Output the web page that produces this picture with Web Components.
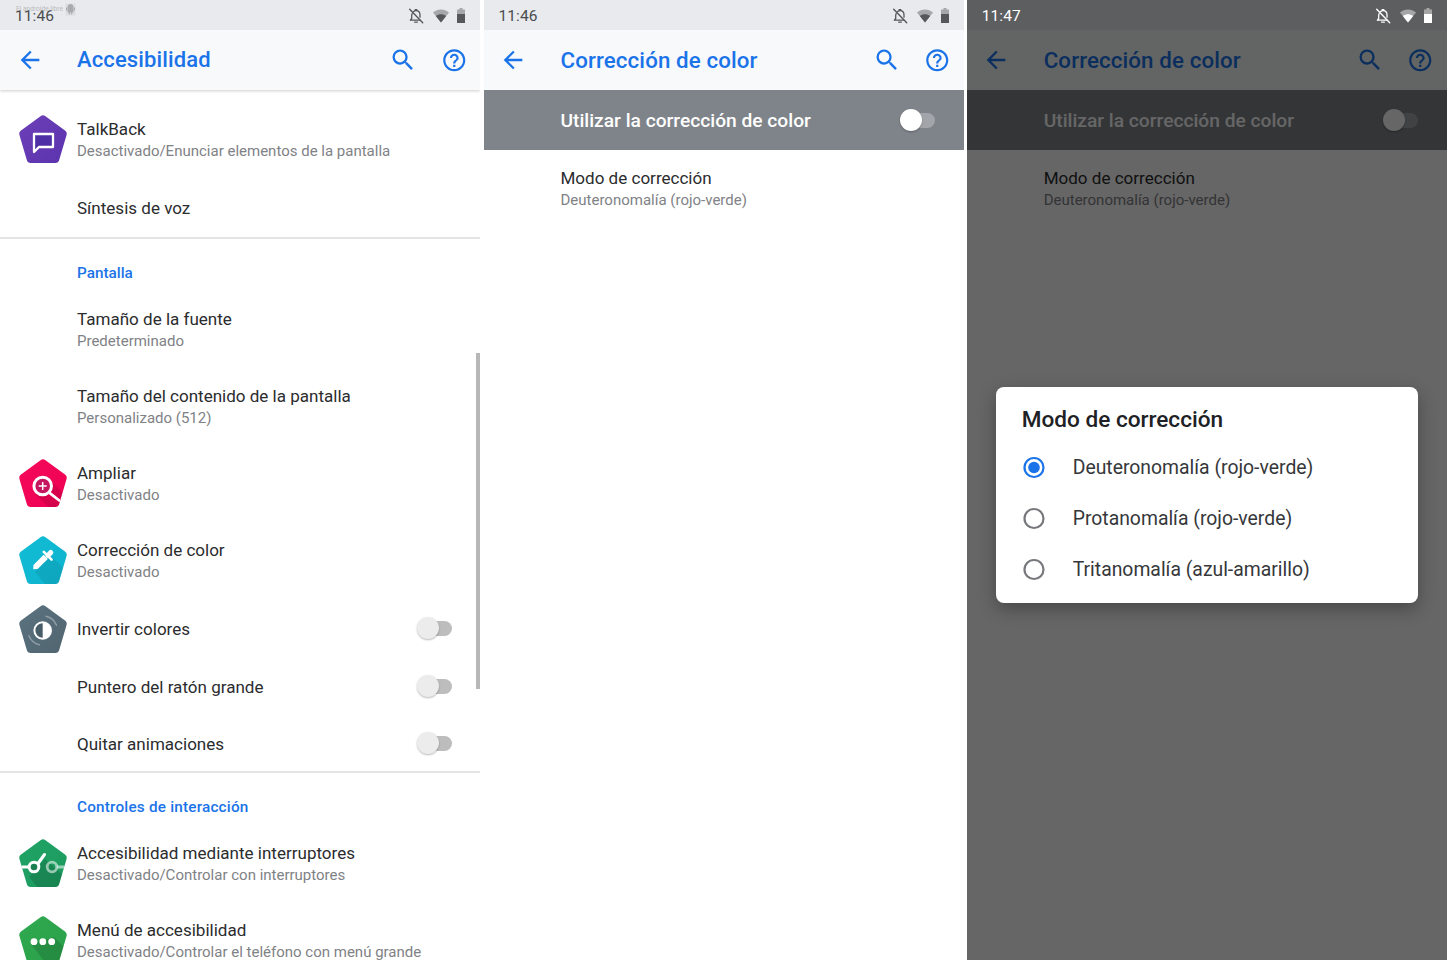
<!DOCTYPE html>
<html lang="es"><head><meta charset="utf-8"><title>Accesibilidad</title>
<style>
html,body{margin:0;padding:0;background:#fff;overflow:hidden}
body{width:1447px;height:960px;font-family:Roboto,"Liberation Sans",sans-serif}
</style></head><body>
<x-desk>
  <x-phone>
    <x-statusbar time="11:46" watermark></x-statusbar>
    <x-appbar shadow style="font-size:22px">Accesibilidad</x-appbar>
    <x-list top="12">
      <x-row two><x-pent slot="icon" kind="talkback"></x-pent>TalkBack<span slot="sub">Desactivado/Enunciar elementos de la pantalla</span></x-row>
      <x-row>Síntesis de voz</x-row>
      <x-divider></x-divider>
      <x-category style="letter-spacing:0">Pantalla</x-category>
      <x-row two>Tamaño de la fuente<span slot="sub">Predeterminado</span></x-row>
      <x-row two>Tamaño del contenido de la pantalla<span slot="sub">Personalizado (512)</span></x-row>
      <x-row two><x-pent slot="icon" kind="magnify"></x-pent>Ampliar<span slot="sub">Desactivado</span></x-row>
      <x-row two><x-pent slot="icon" kind="dropper"></x-pent>Corrección de color<span slot="sub">Desactivado</span></x-row>
      <x-row><x-pent slot="icon" kind="invert"></x-pent>Invertir colores<x-toggle slot="end"></x-toggle></x-row>
      <x-row>Puntero del ratón grande<x-toggle slot="end"></x-toggle></x-row>
      <x-row style="min-height:55px">Quitar animaciones<x-toggle slot="end"></x-toggle></x-row>
      <x-divider></x-divider>
      <x-category>Controles de interacción</x-category>
      <x-row two><x-pent slot="icon" kind="switch"></x-pent>Accesibilidad mediante interruptores<span slot="sub">Desactivado/Controlar con interruptores</span></x-row>
      <x-row two><x-pent slot="icon" kind="menu"></x-pent>Menú de accesibilidad<span slot="sub">Desactivado/Controlar el teléfono con menú grande</span></x-row>
    </x-list>
    <x-scrollthumb></x-scrollthumb>
  </x-phone>
  <x-phone>
    <x-statusbar time="11:46"></x-statusbar>
    <x-appbar>Corrección de color</x-appbar>
    <x-list>
      <x-masterrow>Utilizar la corrección de color<x-toggle slot="end" light></x-toggle></x-masterrow>
      <x-row two style="padding-top:2px">Modo de corrección<span slot="sub">Deuteronomalía (rojo-verde)</span></x-row>
    </x-list>
  </x-phone>
  <x-phone>
    <x-statusbar time="11:47" dark></x-statusbar>
    <x-appbar>Corrección de color</x-appbar>
    <x-list>
      <x-masterrow>Utilizar la corrección de color<x-toggle slot="end" light></x-toggle></x-masterrow>
      <x-row two style="padding-top:2px">Modo de corrección<span slot="sub">Deuteronomalía (rojo-verde)</span></x-row>
    </x-list>
    <x-scrim>
      <x-dialog heading="Modo de corrección">
        <x-radio checked>Deuteronomalía (rojo-verde)</x-radio>
        <x-radio>Protanomalía (rojo-verde)</x-radio>
        <x-radio>Tritanomalía (azul-amarillo)</x-radio>
      </x-dialog>
    </x-scrim>
  </x-phone>
</x-desk>
<script>
const BLUE='#1a73e8';
const P='M21.5 1.2Q24 -.6 26.5 1.2L46 15.6Q48.4 17.4 47.5 20.2L40.2 45Q39.4 48 36.4 48L11.6 48Q8.6 48 7.8 45L.5 20.2Q-.4 17.4 2 15.6Z';
function def(name,css,html){
  customElements.define(name,class extends HTMLElement{
    constructor(){super();this.attachShadow({mode:'open'});}
    connectedCallback(){
      if(this.__r)return;this.__r=1;
      this.shadowRoot.innerHTML='<style>'+css+'</style>'+(typeof html==='function'?html(this):html);
    }
  });
}
def('x-desk',':host{display:flex;width:1447px;height:960px;overflow:hidden}::slotted(x-phone:nth-child(2)){margin-left:3.5px}::slotted(x-phone:nth-child(3)){margin-left:3.2px}','<slot></slot>');
def('x-phone',':host{display:flex;flex-direction:column;position:relative;width:480px;height:960px;flex:none;overflow:hidden;background:#fff}','<slot></slot>');
def('x-statusbar',`:host{display:flex;align-items:center;height:30px;flex:none;background:#e8eaed;color:#4a4c4f;position:relative;z-index:5;font:400 15.5px/28px Roboto,sans-serif;letter-spacing:.1px;padding:0 15px;box-sizing:border-box}
:host([dark]){background:#5d5e5f;color:#fff}
.tm{padding-top:2px}
.i{margin-left:auto;display:flex;align-items:center;height:30px;padding-top:1px;box-sizing:border-box}
svg{display:block}
.wm{position:absolute;left:16px;top:3px;font:400 6.6px/12px Roboto,sans-serif;letter-spacing:0;color:#b9babc;display:flex;align-items:flex-start;gap:2px}
`,e=>{const c=e.hasAttribute('dark')?'#fff':'#55575a';const l=e.hasAttribute('dark')?'rgba(255,255,255,.45)':'rgba(85,87,90,.45)';
return `<span class="tm">${e.getAttribute('time')}</span>${e.hasAttribute('watermark')?`<span class="wm">El androide libre<svg width="11" height="13" viewBox="0 0 11 13"><rect x=".5" y=".5" width="10" height="12" fill="#dcdde0"/><path d="M3 4a2.5 2.5 0 0 1 5 0v5H3zM1.500 4.500v3M9.500 4.500v3M4.300 9v2.500M6.700 9v2.500" fill="#a9aaad" stroke="#a9aaad"/></svg></span>`:''}
<span class="i">
<svg width="16" height="16" viewBox="0 0 16 16" fill="none" stroke="${c}" stroke-width="1.3" stroke-linecap="round" stroke-linejoin="round"><path d="M3.400 12.200h8.600M4.200 5.600c-.3.500-.5 1.200-.5 2v2.900l-1.300 1.700M5.600 3.500c.7-.6 1.500-.9 2.400-.9 2.500 0 4 1.900 4 4.300v2.300M6.600 14.100h2.800"/><path d="M7.200 2.400V1.600h1.600v.8"/><path d="M1.700 1.300l13 13.400" stroke-width="1.400"/></svg>
<svg style="margin-left:8px" width="18" height="14" viewBox="0 0 18 14"><path d="M1 3.600C3.300 1.600 6 .6 9 .6s5.700 1 8 3L9 13.400z" fill="${l}"/><path d="M3.800 7c1.500-1.100 3.300-1.700 5.200-1.700s3.700.6 5.200 1.700L9 13.400z" fill="${c}"/></svg>
<svg style="margin-left:7px" width="8" height="15" viewBox="0 0 8 15"><path d="M2.500 0h3v1.500H8V6H0V1.500h2.500z" fill="${l}"/><path d="M0 6h8v9H0z" fill="${c}"/></svg>
</span>`;});
def('x-appbar',`:host{display:flex;align-items:center;height:60px;flex:none;background:#f8f9fb;color:${BLUE};position:relative;z-index:2;font:500 22.3px/60px Roboto,sans-serif;letter-spacing:.12px}
:host([shadow]){box-shadow:0 1px 3px rgba(0,0,0,.2)}
.b{display:flex;align-items:center;justify-content:center;height:60px;flex:none}
.t{flex:1;min-width:0;padding-left:18px}
svg{display:block;fill:${BLUE}}`,`
<span class="b" style="width:59px"><svg width="28" height="28" viewBox="0 0 24 24"><path d="M20 11H7.830l5.590-5.590L12 4l-8 8 8 8 1.410-1.410L7.830 13H20v-2z"/></svg></span>
<span class="t"><slot></slot></span>
<span class="b" style="width:51px"><svg width="28" height="28" viewBox="0 0 24 24"><path d="M15.500 14h-.79l-.28-.27A6.471 6.471 0 0 0 16 9.500 6.500 6.500 0 1 0 9.500 16c1.610 0 3.090-.59 4.230-1.570l.27.28v.79l5 4.990L20.490 19l-4.990-5zm-6 0C7.010 14 5 11.990 5 9.500S7.010 5 9.500 5 14 7.010 14 9.500 11.990 14 9.500 14z"/></svg></span>
<span class="b" style="width:51px;margin-right:.5px"><svg width="26.500" height="26.500" viewBox="0 0 24 24"><path d="M11 18h2v-2h-2v2zm1-16C6.480 2 2 6.480 2 12s4.480 10 10 10 10-4.480 10-10S17.520 2 12 2zm0 18c-4.410 0-8-3.590-8-8s3.590-8 8-8 8 3.590 8 8-3.590 8-8 8zm0-14c-2.210 0-4 1.790-4 4h2c0-1.100.9-2 2-2s2 .9 2 2c0 2-3 1.750-3 5h2c0-2.250 3-2.500 3-5 0-2.210-1.790-4-4-4z"/></svg></span>`);
def('x-list',`:host{display:block;flex:1;min-height:0}:host([top="12"]){padding-top:12px}`,'<slot></slot>');
def('x-row',`:host{display:flex;align-items:center;min-height:58px;color:#2b2c2e;font:400 17.05px/22px Roboto,sans-serif;box-sizing:border-box}
:host([two]){min-height:77px}
.ic{flex:none;width:77px;padding-left:19px;box-sizing:border-box;display:flex}
:host([two]) .ic{margin-top:-3px}
.tx{flex:1;min-width:0;white-space:nowrap}
:host([two]) .tx{margin-top:-1px}
.s{display:block;color:#7f8286;font-size:15px;line-height:22px}
:host(:not([two])) .s{display:none}
.e{flex:none;padding-right:28px;display:flex;margin-top:-1px}`,`<span class="ic"><slot name="icon"></slot></span><span class="tx"><slot></slot><span class="s"><slot name="sub"></slot></span></span><span class="e"><slot name="end"></slot></span>`);
def('x-masterrow',`:host{display:flex;align-items:center;height:60px;background:#7f848a;color:#fff;font:500 19.2px/58px Roboto,sans-serif;padding-left:77px}
.t{flex:1;white-space:nowrap;padding-top:2px}.e{padding-right:28.500px;display:flex}`,`<span class="t"><slot></slot></span><span class="e"><slot name="end"></slot></span>`);
def('x-divider',`:host{display:block;height:2px;background:#e4e4e5}`,'');
def('x-category',`:host{display:block;height:53px;box-sizing:border-box;padding:23px 0 0 77px;color:${BLUE};font:500 15.300px/22px Roboto,sans-serif;letter-spacing:.2px}`,'<slot></slot>');
def('x-toggle',`:host{display:block;position:relative;width:36px;height:23px;--t:#bdbdbd;--h:#ececec}
:host([light]){--t:rgba(255,255,255,.28);--h:#fff}
.t{position:absolute;right:0;top:4px;width:28px;height:15px;border-radius:8px;background:var(--t)}
.h{position:absolute;left:.5px;top:0;width:22px;height:22px;border-radius:50%;background:var(--h);box-shadow:0 1px 2px rgba(0,0,0,.28)}`,'<span class="t"></span><span class="h"></span>');
def('x-scrollthumb',`:host{position:absolute;right:0;top:353px;width:4px;height:336px;background:#b7b7b7}`,'');
def('x-scrim',`:host{position:absolute;left:0;right:0;top:30px;bottom:0;background:rgba(0,0,0,.6);z-index:4;display:flex;align-items:center;justify-content:center}`,'<slot></slot>');
def('x-dialog',`:host{display:block;width:422px;height:216px;box-sizing:border-box;background:#fff;border-radius:8px;box-shadow:0 6px 18px rgba(0,0,0,.3);padding-top:16px}
h2{margin:0 0 6px;padding-left:26px;font:500 22.600px/33px Roboto,sans-serif;color:#202124}`,e=>`<h2>${e.getAttribute('heading')}</h2><slot></slot>`);
def('x-radio',`:host{display:flex;align-items:center;height:51px;padding-left:27px;color:#36373a;font:400 19.360px/51px Roboto,sans-serif;white-space:nowrap}
svg{display:block;flex:none;margin-right:27px}`,e=>{const on=e.hasAttribute('checked');return `<svg width="23" height="23" viewBox="0 0 23 23"><circle cx="11" cy="11.500" r="9.500" fill="none" stroke="${on?BLUE:'#77787b'}" stroke-width="2.200"/>${on?`<circle cx="11" cy="11.500" r="5.800" fill="${BLUE}"/>`:''}</svg><slot></slot>`});
const ICONS={
 talkback:{a:'#6d3fb8',b:'#5b34ae',s:`<path d="M15 19H34V32H20L15 37Z" fill="#4f2fa6" stroke="#fff" stroke-width="2.300" stroke-linejoin="round"/>`},
 magnify:{a:'#f50a5a',b:'#ee0052',s:`<path d="M16 35L30 20L60 50L44 62Z" fill="#000" opacity=".1"/><circle cx="23.700" cy="27" r="8.800" fill="#c51760" stroke="#fff" stroke-width="3"/><path d="M30.500 33.800L40.300 41.500" stroke="#fff" stroke-width="2.800" stroke-linecap="round"/><path d="M23.700 23v8M19.700 27h8" stroke="#fff" stroke-width="1.500"/>`},
 dropper:{a:'#12bdd6',b:'#0fb2cc',s:`<path d="M16 36L30 18L60 48L36 60Z" fill="#000" opacity=".07"/><path d="M15 32.500L15.300 29.300L24.700 19.900L27.700 22.900L18.300 32.300Z" fill="#fff" stroke="#fff" stroke-width="1.600" stroke-linejoin="round"/><path d="M24.800 15.800L32.600 23.600" stroke="#fff" stroke-width="2.600" stroke-linecap="round"/><path d="M29 19.500L31.800 16.500" stroke="#fff" stroke-width="5" stroke-linecap="round"/>`},
 invert:{a:'#5b7280',b:'#50656f',s:`<circle cx="23.700" cy="25.500" r="8.300" fill="#485d68" stroke="#fff" stroke-width="2"/><path d="M23.700 17.200a8.300 8.300 0 0 1 0 16.600z" fill="#fff"/><path d="M27 11.200a15 15 0 0 1 10.500 9M20.400 39.800a15 15 0 0 1-10.500-9" fill="none" stroke="#fff" stroke-opacity=".35" stroke-width="1.400" stroke-linecap="round"/>`},
 switch:{a:'#21a366',b:'#1c9a5e',s:`<path d="M10 38L26 20L60 50L30 62Z" fill="#000" opacity=".14"/><path d="M0 28H10M19 24.500L25.500 15.500" stroke="#fff" stroke-width="3" stroke-linecap="round"/><circle cx="15" cy="28" r="4.800" fill="#1b7f52" stroke="#fff" stroke-width="3"/><path d="M38 28H48" stroke="#fff" stroke-opacity=".55" stroke-width="2.800"/><circle cx="33" cy="28" r="4.800" fill="none" stroke="#fff" stroke-opacity=".55" stroke-width="2.800"/>`},
 menu:{a:'#2fa94f',b:'#2aa04a',s:`<path d="M12 28L35 21L60 46L38 62Z" fill="#000" opacity=".13"/><circle cx="15" cy="25.700" r="3.400" fill="#fff"/><circle cx="23.800" cy="25.700" r="3.400" fill="#fff"/><circle cx="32.700" cy="25.700" r="3.400" fill="#fff"/>`}
};
def('x-pent',`:host{display:block;width:48px;height:48px;flex:none}svg{display:block;overflow:visible}`,e=>{
 const d=ICONS[e.getAttribute('kind')];
 return `<svg width="48" height="48" viewBox="0 0 48 48"><defs><clipPath id="c"><path d="${P}"/></clipPath><linearGradient id="g" x1="0" y1="0" x2="1" y2="1"><stop offset="0" stop-color="${d.a}"/><stop offset="1" stop-color="${d.b}"/></linearGradient></defs><path d="${P}" fill="url(#g)"/><g clip-path="url(#c)">${d.s}</g></svg>`;
});
</script>
</body></html>
